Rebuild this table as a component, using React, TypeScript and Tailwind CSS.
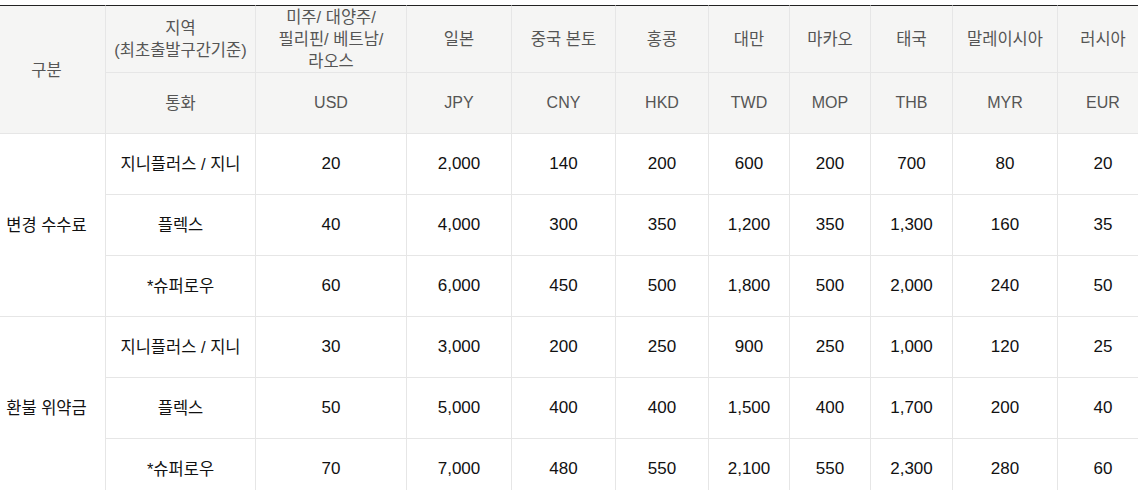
const regions = [
  { name: ["미주/ 대양주/", "필리핀/ 베트남/", "라오스"], cur: "USD" },
  { name: ["일본"], cur: "JPY" },
  { name: ["중국 본토"], cur: "CNY" },
  { name: ["홍콩"], cur: "HKD" },
  { name: ["대만"], cur: "TWD" },
  { name: ["마카오"], cur: "MOP" },
  { name: ["태국"], cur: "THB" },
  { name: ["말레이시아"], cur: "MYR" },
  { name: ["러시아"], cur: "EUR" },
];

const groups = [
  {
    label: "변경 수수료",
    rows: [
      { fare: "지니플러스 / 지니", values: ["20", "2,000", "140", "200", "600", "200", "700", "80", "20"] },
      { fare: "플렉스", values: ["40", "4,000", "300", "350", "1,200", "350", "1,300", "160", "35"] },
      { fare: "*슈퍼로우", values: ["60", "6,000", "450", "500", "1,800", "500", "2,000", "240", "50"] },
    ],
  },
  {
    label: "환불 위약금",
    rows: [
      { fare: "지니플러스 / 지니", values: ["30", "3,000", "200", "250", "900", "250", "1,000", "120", "25"] },
      { fare: "플렉스", values: ["50", "5,000", "400", "400", "1,500", "400", "1,700", "200", "40"] },
      { fare: "*슈퍼로우", values: ["70", "7,000", "480", "550", "2,100", "550", "2,300", "280", "60"] },
    ],
  },
];

const widths = ["w-[106px]", "w-[150px]", "w-[151px]", "w-[105px]", "w-[104px]", "w-[93px]", "w-[81px]", "w-[81px]", "w-[82px]", "w-[105px]", "w-[80px]"];

const line = "border-[#e6e6e6]";

export default function App() {
  return (
    <div
      className="w-[1138px] h-[490px] overflow-hidden bg-white pt-[5px]"
      style={{ fontFamily: '"Liberation Sans", "Noto Sans CJK KR", sans-serif' }}
    >
      <table className="w-[1138px] table-fixed border-separate border-spacing-0 text-center">
        <colgroup>
          {widths.map((w, i) => (
            <col key={i} className={w} />
          ))}
        </colgroup>
        <thead className="bg-[#f5f5f4] text-[16.5px] leading-[22px] text-[#555]">
          <tr className="h-[68px]">
            <th rowSpan={2} className={`border-t border-t-[#222] border-r border-b ${line} p-0 pr-3 font-normal`}>
              구분
            </th>
            <th className={`border-t border-t-[#222] border-r border-b ${line} p-0 font-normal`}>
              지역
              <br />
              (최초출발구간기준)
            </th>
            {regions.map((r, i) => (
              <th
                key={r.cur}
                className={`border-t border-t-[#222] border-b ${line} p-0 font-normal ${i < regions.length - 1 ? "border-r" : "pl-[10px]"}`}
              >
                {r.name.map((n, j) => (
                  <div key={j}>{n}</div>
                ))}
              </th>
            ))}
          </tr>
          <tr className="h-[61px]">
            <th className={`border-r border-b ${line} p-0 font-normal`}>통화</th>
            {regions.map((r, i) => (
              <th
                key={r.cur}
                className={`border-b ${line} p-0 text-[16px] font-normal ${i < regions.length - 1 ? "border-r" : "pl-[10px]"}`}
              >
                {r.cur}
              </th>
            ))}
          </tr>
        </thead>
        <tbody className="text-[17px] text-[#111]">
          {groups.map((g) =>
            g.rows.map((row, ri) => (
              <tr key={g.label + ri} className="h-[61px]">
                {ri === 0 && (
                  <td rowSpan={3} className={`border-r border-b ${line} p-0 pr-3 text-[16.5px]`}>
                    {g.label}
                  </td>
                )}
                <td className={`border-r border-b ${line} p-0 text-[16.5px]`}>{row.fare}</td>
                {row.values.map((v, vi) => (
                  <td
                    key={vi}
                    className={`border-b ${line} p-0 ${vi < row.values.length - 1 ? "border-r" : "pl-[10px]"}`}
                  >
                    {v}
                  </td>
                ))}
              </tr>
            ))
          )}
        </tbody>
      </table>
    </div>
  );
}
